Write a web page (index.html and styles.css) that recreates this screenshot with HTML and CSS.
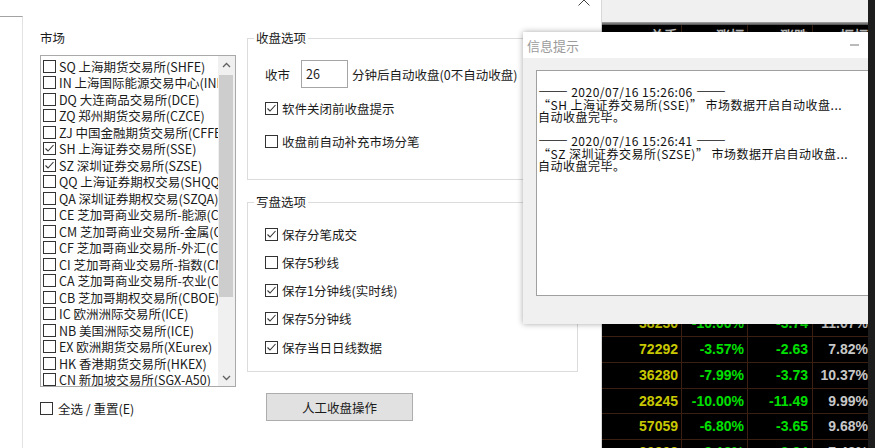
FILE: index.html
```html
<!DOCTYPE html>
<html lang="zh-CN">
<head>
    <meta charset="UTF-8">
    <title>收盘设置</title>
    <link rel="stylesheet" href="styles.css">
</head>
<body>
<div class="desktop">
    <div class="back-win"></div>

    <div class="dialog">
        <div class="caption">
            <svg class="close" width="12" height="12" viewBox="0 0 12 12"><path d="M0.5 0.5L11.5 11.5M11.5 0.5L0.5 11.5" stroke="#444" stroke-width="1" fill="none"/></svg>
        </div>
        <div class="dialog-body">
            <div class="market">
                <div class="label">市场</div>
                <div class="listbox">
                    <div class="list-items">
                        <div class="item"><span class="box"></span>SQ 上海期货交易所(SHFE)</div>
                        <div class="item"><span class="box"></span>IN 上海国际能源交易中心(INE)</div>
                        <div class="item"><span class="box"></span>DQ 大连商品交易所(DCE)</div>
                        <div class="item"><span class="box"></span>ZQ 郑州期货交易所(CZCE)</div>
                        <div class="item"><span class="box"></span>ZJ 中国金融期货交易所(CFFEX)</div>
                        <div class="item"><span class="box"><svg width="11" height="11" viewBox="0 0 11 11"><path d="M1.5 5.5L4 8L9.5 2" stroke="#333" stroke-width="1.1" fill="none"/></svg></span>SH 上海证券交易所(SSE)</div>
                        <div class="item"><span class="box"><svg width="11" height="11" viewBox="0 0 11 11"><path d="M1.5 5.5L4 8L9.5 2" stroke="#333" stroke-width="1.1" fill="none"/></svg></span>SZ 深圳证券交易所(SZSE)</div>
                        <div class="item"><span class="box"></span>QQ 上海证券期权交易(SHQQ)</div>
                        <div class="item"><span class="box"></span>QA 深圳证券期权交易(SZQA)</div>
                        <div class="item"><span class="box"></span>CE 芝加哥商业交易所-能源(CME)</div>
                        <div class="item"><span class="box"></span>CM 芝加哥商业交易所-金属(CME)</div>
                        <div class="item"><span class="box"></span>CF 芝加哥商业交易所-外汇(CME)</div>
                        <div class="item"><span class="box"></span>CI 芝加哥商业交易所-指数(CME)</div>
                        <div class="item"><span class="box"></span>CA 芝加哥商业交易所-农业(CBOT)</div>
                        <div class="item"><span class="box"></span>CB 芝加哥期权交易所(CBOE)</div>
                        <div class="item"><span class="box"></span>IC 欧洲洲际交易所(ICE)</div>
                        <div class="item"><span class="box"></span>NB 美国洲际交易所(ICE)</div>
                        <div class="item"><span class="box"></span>EX 欧洲期货交易所(XEurex)</div>
                        <div class="item"><span class="box"></span>HK 香港期货交易所(HKEX)</div>
                        <div class="item"><span class="box"></span>CN 新加坡交易所(SGX-A50)</div>
                    </div>
                    <div class="scrollbar">
                        <div class="arrow"><svg width="9" height="6" viewBox="0 0 9 6"><path d="M1 5L4.5 1.5L8 5" stroke="#606060" stroke-width="1.3" fill="none"/></svg></div>
                        <div class="track"><div class="thumb"></div></div>
                        <div class="arrow"><svg width="9" height="6" viewBox="0 0 9 6"><path d="M1 1L4.5 4.5L8 1" stroke="#606060" stroke-width="1.3" fill="none"/></svg></div>
                    </div>
                </div>
                <div class="check all"><span class="box"></span>全选 / 重置(E)</div>
            </div>

            <div class="options">
                <fieldset class="group g-close">
                    <legend>收盘选项</legend>
                    <div class="field-row">
                        <span>收市</span>
                        <span class="input">26</span>
                        <span>分钟后自动收盘(0不自动收盘)</span>
                    </div>
                    <div class="check c-first"><span class="box"><svg width="11" height="11" viewBox="0 0 11 11"><path d="M1.5 5.5L4 8L9.5 2" stroke="#333" stroke-width="1.1" fill="none"/></svg></span>软件关闭前收盘提示</div>
                    <div class="check c-second"><span class="box"></span>收盘前自动补充市场分笔</div>
                </fieldset>

                <fieldset class="group g-write">
                    <legend>写盘选项</legend>
                    <div class="check"><span class="box"><svg width="11" height="11" viewBox="0 0 11 11"><path d="M1.5 5.5L4 8L9.5 2" stroke="#333" stroke-width="1.1" fill="none"/></svg></span>保存分笔成交</div>
                    <div class="check"><span class="box"></span>保存5秒线</div>
                    <div class="check"><span class="box"><svg width="11" height="11" viewBox="0 0 11 11"><path d="M1.5 5.5L4 8L9.5 2" stroke="#333" stroke-width="1.1" fill="none"/></svg></span>保存1分钟线(实时线)</div>
                    <div class="check"><span class="box"><svg width="11" height="11" viewBox="0 0 11 11"><path d="M1.5 5.5L4 8L9.5 2" stroke="#333" stroke-width="1.1" fill="none"/></svg></span>保存5分钟线</div>
                    <div class="check"><span class="box"><svg width="11" height="11" viewBox="0 0 11 11"><path d="M1.5 5.5L4 8L9.5 2" stroke="#333" stroke-width="1.1" fill="none"/></svg></span>保存当日日线数据</div>
                </fieldset>

                <button class="btn">人工收盘操作</button>
            </div>
        </div>
    </div>

    <div class="quote">
        <div class="quote-head"></div>
        <div class="quote-rule"></div>
        <div class="q-row q-title"><span>总手</span><span>涨幅</span><span>涨跌</span><span>振幅</span></div>
        <!-- rows covered by the popup -->
        <div class="q-row"><span></span><span></span><span></span><span></span></div>
        <div class="q-row"><span></span><span></span><span></span><span></span></div>
        <div class="q-row"><span></span><span></span><span></span><span></span></div>
        <div class="q-row"><span></span><span></span><span></span><span></span></div>
        <div class="q-row"><span></span><span></span><span></span><span></span></div>
        <div class="q-row"><span></span><span></span><span></span><span></span></div>
        <div class="q-row"><span></span><span></span><span></span><span></span></div>
        <div class="q-row"><span></span><span></span><span></span><span></span></div>
        <div class="q-row"><span></span><span></span><span></span><span></span></div>
        <div class="q-row"><span></span><span></span><span></span><span></span></div>
        <div class="q-row"><span class="vol">38230</span><span class="dn">-10.00%</span><span class="dn">-3.74</span><span class="amp">11.07%</span></div>
        <div class="q-row"><span class="vol">72292</span><span class="dn">-3.57%</span><span class="dn">-2.63</span><span class="amp">7.82%</span></div>
        <div class="q-row"><span class="vol">36280</span><span class="dn">-7.99%</span><span class="dn">-3.73</span><span class="amp">10.37%</span></div>
        <div class="q-row"><span class="vol">28245</span><span class="dn">-10.00%</span><span class="dn">-11.49</span><span class="amp">9.99%</span></div>
        <div class="q-row"><span class="vol">57059</span><span class="dn">-6.80%</span><span class="dn">-3.65</span><span class="amp">9.68%</span></div>
        <div class="q-row"><span class="vol">30808</span><span class="dn">-8.18%</span><span class="dn">-3.84</span><span class="amp">7.48%</span></div>
    </div>

    <div class="popup">
        <div class="popup-title">
            <span>信息提示</span>
            <svg width="9" height="2" viewBox="0 0 9 2"><path d="M0 1H9" stroke="#777" stroke-width="1"/></svg>
        </div>
        <div class="popup-body">
<div class="log">
<span class="rule">——</span> 2020/07/16 15:26:06 <span class="rule">——</span>
“SH 上海证券交易所(SSE)” 市场数据开启自动收盘...
自动收盘完毕。

<span class="rule">——</span> 2020/07/16 15:26:41 <span class="rule">——</span>
“SZ 深圳证券交易所(SZSE)” 市场数据开启自动收盘...
自动收盘完毕。</div>
        </div>
    </div>

    <div class="edge"></div>
</div>
</body>
</html>
```

FILE: styles.css
```css
body {
    margin: 0;
}

.desktop {
    position: relative;
    width: 875px;
    height: 448px;
    overflow: hidden;
    background: #fff;
    font-family: "Noto Sans CJK SC", sans-serif;
    font-size: 12.5px;
    color: #1b1b1b;
}

/* window behind the dialog */
.back-win {
    position: absolute;
    left: 0;
    top: 16px;
    width: 22px;
    height: 432px;
    border-top: 1px solid #a3a3a3;
    border-right: 1px solid #e2e2e2;
}

.dialog {
    position: absolute;
    left: 24px;
    top: 0;
    width: 578px;
    height: 448px;
    box-sizing: border-box;
    background: #fff;
    border-right: 1px solid #d8d8d8;
}

.caption {
    height: 8px;
    display: flex;
    justify-content: flex-end;
    padding-right: 11px;
}

.close {
    margin-top: -6px;
}

.dialog-body {
    display: flex;
    gap: 11px;
    padding-left: 16px;
}

.market {
    width: 196px;
}

.label {
    margin-top: 22px;
    line-height: 16px;
}

.listbox {
    margin-top: 9px;
    height: 332px;
    box-sizing: border-box;
    border: 1px solid #a9a9a9;
    display: flex;
}

.list-items {
    flex: 1;
    overflow: hidden;
    padding-top: 2px;
}

.item {
    display: flex;
    align-items: center;
    gap: 3px;
    height: 16.5px;
    padding-left: 2px;
    white-space: nowrap;
}

.box {
    flex: none;
    display: flex;
    width: 13px;
    height: 13px;
    box-sizing: border-box;
    border: 1px solid #333;
    background: #fff;
}

.scrollbar {
    width: 17px;
    background: #f0f0f0;
    display: flex;
    flex-direction: column;
}

.arrow {
    height: 17px;
    display: flex;
    align-items: center;
    justify-content: center;
}

.track {
    flex: 1;
}

.thumb {
    height: 222px;
    margin: 2px 2px 0 1px;
    background: #cdcdcd;
}

.check {
    display: flex;
    align-items: center;
    gap: 4px;
    height: 16px;
    white-space: nowrap;
}

.all {
    margin-top: 13px;
    gap: 5px;
}

.options {
    width: 331px;
}

.group {
    margin: 0;
    box-sizing: border-box;
    border: 1px solid #dcdcdc;
    min-width: 0;
}

.group legend {
    padding: 0 2px;
    margin-left: -11px;
    line-height: 16px;
}

.g-close {
    margin-top: 22px;
    height: 150px;
    padding: 14px 0 0 17px;
}

.field-row {
    display: flex;
    align-items: center;
    height: 28px;
}

.input {
    width: 47px;
    height: 28px;
    box-sizing: border-box;
    margin: 0 4px 0 11px;
    padding-left: 4px;
    border: 1px solid #a5a5a5;
    line-height: 26px;
}

.c-first {
    margin-top: 12.5px;
}

.c-second {
    margin-top: 16.5px;
}

.g-write {
    margin-top: 14px;
    height: 178px;
    padding: 16px 0 0 17px;
}

.g-write .check + .check {
    margin-top: 12.25px;
}

.btn {
    display: block;
    margin: 21px 0 0 19px;
    width: 147px;
    height: 28px;
    background: #e1e1e1;
    border: 1px solid #adadad;
    font: inherit;
    color: inherit;
}

/* quote list window on the right */
.quote {
    position: absolute;
    left: 602px;
    top: 0;
    width: 280px;
    height: 448px;
    background: #000;
    font: bold 14px "Liberation Sans", Arial, sans-serif;
}

.quote-head {
    height: 22px;
    background: #f0f0f0;
}

.quote-rule {
    height: 3px;
    background: linear-gradient(#a8a8a8, #4a4a4a);
}

.q-row {
    display: grid;
    grid-template-columns: 80px 66px 65px 59px;
    height: 25.75px;
    box-sizing: border-box;
    border-bottom: 1px solid #3b1f10;
}

.q-row span {
    border-right: 1px solid #3b1f10;
    padding-right: 3px;
    text-align: right;
    line-height: 25px;
}

.q-row span:nth-child(3) {
    padding-right: 4px;
}

.q-title {
    height: 28.75px;
    color: #c8c8c8;
}

.q-title span {
    line-height: 22px;
}

.vol {
    color: #c8c800;
}

.dn {
    color: #00e000;
}

.amp {
    color: #c8c8c8;
}

/* message popup */
.popup {
    position: absolute;
    left: 523px;
    top: 32px;
    width: 360px;
    height: 292px;
    background: #f0f0f0;
    box-shadow: 0 0 6px rgba(0, 0, 0, 0.35);
}

.popup-title {
    height: 26px;
    background: #fff;
    display: flex;
    align-items: center;
    justify-content: space-between;
    padding: 0 24px 0 4px;
    font-size: 13px;
    color: #9b9b9b;
}

.popup-body {
    padding: 12px 0 0 13px;
}

.log {
    height: 226px;
    box-sizing: border-box;
    background: #fff;
    border: 1px solid #a0a0a0;
    border-right: 0;
    padding: 3px 0 0 1px;
    font-size: 12px;
    line-height: 12.3px;
    letter-spacing: 0.5px;
    white-space: pre;
    color: #111;
}

.rule {
    font-size: 15px;
    line-height: 1px;
    letter-spacing: 0;
}

.edge {
    position: absolute;
    top: 0;
    right: 0;
    width: 7px;
    height: 448px;
    background: #1d1d1d;
}
```
